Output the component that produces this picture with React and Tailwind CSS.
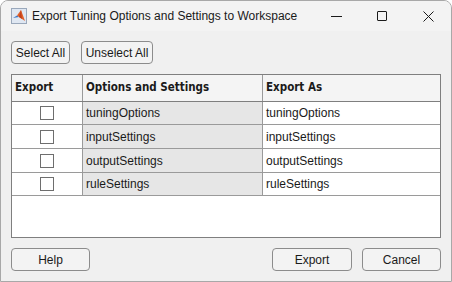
import React from "react"

const rows = [
  { name: "tuningOptions", h: "h-[23px]" },
  { name: "inputSettings", h: "h-[24px]" },
  { name: "outputSettings", h: "h-[24px]" },
  { name: "ruleSettings", h: "h-[23px]" },
]

const headFont = { fontFamily: '"DejaVu Sans Condensed", "DejaVu Sans", sans-serif', fontSize: "11.5px" }

function MatlabLogo() {
  return (
    <svg width="16" height="16" viewBox="0 0 16 16">
      <rect x="0.5" y="0.5" width="15" height="15" fill="#dfe7f2" stroke="#9aa8bb" />
      <path d="M2 10 L6 7.5 L8 9 Z" fill="#3d78c7" />
      <path d="M6 7.5 L10 2 L14 13 L11 11 L8 9 Z" fill="#e0602a" />
      <path d="M10 2 L11 11 L8 9 Z" fill="#c2401a" />
    </svg>
  )
}

function Btn({ children, className = "" }) {
  return (
    <button
      className={`h-[23px] rounded-[4px] border border-[#8c8c8c] bg-[#f3f3f3] text-[12px] text-[#1a1a1a] leading-none ${className}`}
    >
      {children}
    </button>
  )
}

export default function App() {
  return (
    <div
      className="w-[452px] h-[282px] overflow-hidden rounded-t-[8px] border border-[#a8a8a8] bg-[#f0f0f0] flex flex-col"
      style={{ fontFamily: '"Liberation Sans", Arial, sans-serif' }}
    >
      {/* title bar */}
      <div className="h-[30px] shrink-0 bg-[#f3f3f3] flex items-center pl-[10px]">
        <MatlabLogo />
        <span className="ml-[5px] text-[12px] text-[#1a1a1a]">
          Export Tuning Options and Settings to Workspace
        </span>
        <div className="ml-auto flex items-center h-full">
          <div className="w-[46px] h-full flex items-center justify-center">
            <div className="w-[11px] h-px bg-[#1a1a1a]" />
          </div>
          <div className="w-[46px] h-full flex items-center justify-center">
            <div className="w-[10px] h-[10px] border border-[#1a1a1a] rounded-[1px]" />
          </div>
          <div className="w-[46px] h-full flex items-center justify-center">
            <svg width="11" height="11" viewBox="0 0 11 11">
              <path d="M0.5 0.5 L10.5 10.5 M10.5 0.5 L0.5 10.5" stroke="#1a1a1a" strokeWidth="1" />
            </svg>
          </div>
        </div>
      </div>

      <div className="flex-1 flex flex-col px-[10px]">
        <div className="flex gap-[11px] mt-[10px]">
          <Btn className="w-[59px]">Select All</Btn>
          <Btn className="w-[72px]">Unselect All</Btn>
        </div>

        {/* table */}
        <div className="mt-[10px] w-[430px] h-[164px] border border-[#7f7f7f] bg-white text-[12px] text-[#1a1a1a]">
          <div className="grid grid-cols-[71px_180px_1fr] h-[27px] bg-[#f4f4f4] border-b border-[#7f7f7f] font-bold">
            <div className="flex items-center pl-[3px] border-r border-[#9a9a9a]" style={headFont}>Export</div>
            <div className="flex items-center pl-[3px] border-r border-[#9a9a9a]" style={headFont}>Options and Settings</div>
            <div className="flex items-center pl-[3px]" style={headFont}>Export As</div>
          </div>
          {rows.map((r) => (
            <div key={r.name} className={`grid grid-cols-[71px_180px_1fr] ${r.h} border-b border-[#9a9a9a]`}>
              <div className="flex items-center justify-center border-r border-[#9a9a9a]">
                <div className="w-[14px] h-[14px] border border-[#6e6e6e] bg-white" />
              </div>
              <div className="flex items-center pl-[3px] bg-[#e6e6e6] border-r border-[#9a9a9a]">{r.name}</div>
              <div className="flex items-center pl-[3px]">{r.name}</div>
            </div>
          ))}
        </div>

        <div className="flex mt-[10px] items-center">
          <Btn className="w-[79px]">Help</Btn>
          <Btn className="w-[80px] ml-auto">Export</Btn>
          <Btn className="w-[79px] ml-[10px] border-[#1a73d9]">Cancel</Btn>
        </div>
      </div>
    </div>
  )
}
